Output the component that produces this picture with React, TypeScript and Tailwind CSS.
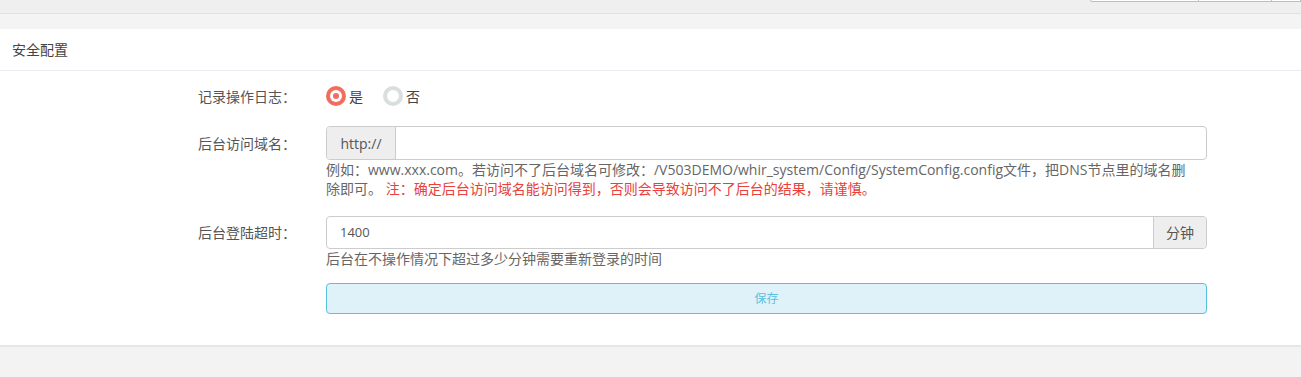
import { useState } from "react";

const font = { fontFamily: '"Open Sans", "Noto Sans CJK SC", sans-serif' };

function Radio({ checked, label, onClick }: { checked: boolean; label: string; onClick: () => void }) {
  return (
    <label className="flex items-center gap-[3px] cursor-pointer" onClick={onClick}>
      {checked ? (
        <span className="flex h-[20px] w-[20px] items-center justify-center rounded-full bg-[#ef6e5f]">
          <span className="flex h-[12px] w-[12px] items-center justify-center rounded-full bg-white">
            <span className="h-[6px] w-[6px] rounded-full bg-[#ef6e5f]" />
          </span>
        </span>
      ) : (
        <span className="h-[20px] w-[20px] rounded-full border-[4px] border-[#d9dede] bg-white" />
      )}
      <span className="text-[14px] text-[#444]">{label}</span>
    </label>
  );
}

export default function App() {
  const [log, setLog] = useState(true);
  const [domain, setDomain] = useState("");
  const [timeout, setTimeoutVal] = useState("1400");

  return (
    <div className="h-[377px] w-full overflow-hidden bg-[#f3f3f3]" style={font}>
      {/* top bar */}
      <div className="relative h-[14px] border-b border-[#e2e2e2] bg-[#efefef]">
        <div className="absolute right-0 top-[-20px] flex h-[22px]">
          <div className="w-[109px] rounded-bl-[2px] border border-[#bdbdbd] bg-white" />
          <div className="w-[73px] border border-l-0 border-[#bdbdbd] bg-white" />
          <div className="w-[29px] border border-l-0 border-[#bdbdbd] bg-white" />
        </div>
      </div>
      <div className="h-[15px] bg-[#f4f4f4]" />

      {/* panel */}
      <div className="border-b-2 border-[#e6e6e6] bg-white">
        <div className="flex h-[42px] items-center border-b border-[#ececf2] pl-[12px] text-[14px] text-[#444]">
          安全配置
        </div>

        <div className="pb-[31px] pt-[14px]">
          {/* row 1 */}
          <div className="flex h-[22px] items-center">
            <div className="w-[296px] text-right text-[14px] text-[#555]">记录操作日志：</div>
            <div className="ml-[30px] flex items-center gap-[20px]">
              <Radio checked={log} label="是" onClick={() => setLog(true)} />
              <Radio checked={!log} label="否" onClick={() => setLog(false)} />
            </div>
          </div>

          {/* row 2 */}
          <div className="mt-[19px] flex items-start">
            <div className="flex h-[34px] w-[296px] items-center justify-end text-[14px] text-[#555]">后台访问域名：</div>
            <div className="ml-[30px] w-[881px]">
              <div className="flex h-[34px] rounded-[4px] border border-[#ccc]">
                <span className="flex w-[69px] items-center justify-center rounded-l-[4px] border-r border-[#ccc] bg-[#eee] text-[14px] text-[#555]">
                  http://
                </span>
                <input
                  className="flex-1 rounded-r-[4px] px-3 text-[14px] text-[#555] outline-none"
                  value={domain}
                  onChange={(e) => setDomain(e.target.value)}
                />
              </div>
              <p className="whitespace-nowrap text-[14px] leading-[19px] text-[#666]">
                例如：www.xxx.com。若访问不了后台域名可修改：/V503DEMO/whir_system/Config/SystemConfig.config文件，把DNS节点里的域名删
                <br />
                除即可。{" "}
                <span className="text-[#e8413c]">注：确定后台访问域名能访问得到，否则会导致访问不了后台的结果，请谨慎。</span>
              </p>
            </div>
          </div>

          {/* row 3 */}
          <div className="mt-[18px] flex items-start">
            <div className="flex h-[33px] w-[296px] items-center justify-end text-[14px] text-[#555]">后台登陆超时：</div>
            <div className="ml-[30px] w-[881px]">
              <div className="flex h-[33px] rounded-[4px] border border-[#ccc]">
                <input
                  className="flex-1 rounded-l-[4px] px-[13px] text-[13px] text-[#555] outline-none"
                  value={timeout}
                  onChange={(e) => setTimeoutVal(e.target.value)}
                />
                <span className="flex w-[53px] items-center justify-center rounded-r-[4px] border-l border-[#ccc] bg-[#eee] text-[14px] text-[#555]">
                  分钟
                </span>
              </div>
              <p className="text-[14px] leading-[19px] text-[#666]">后台在不操作情况下超过多少分钟需要重新登录的时间</p>
              <button className="mt-[15px] flex h-[31px] w-full items-center justify-center rounded-[4px] border border-[#5bc0de] bg-[#dff2f9] text-[12px] text-[#5bc0de]">
                保存
              </button>
            </div>
          </div>
        </div>
      </div>
    </div>
  );
}
